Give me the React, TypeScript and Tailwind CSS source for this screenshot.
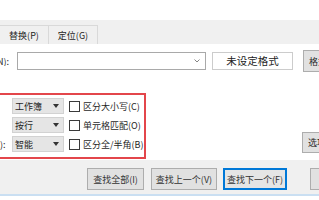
import React from "react";

function Tri() {
  return (
    <svg width="6" height="4" viewBox="0 0 6 4" className="shrink-0">
      <polygon points="0,0 6,0 3,4" fill="#333" />
    </svg>
  );
}

function Row({ label, sel, check }: { label: string; sel: string; check: string }) {
  return (
    <div className="h-[16px] flex items-center">
      <div className="w-[12px] h-full shrink-0 flex items-center overflow-hidden">
        <span className="whitespace-nowrap -ml-[5px]">{label}</span>
      </div>
      <div className="w-[52px] h-[16px] shrink-0 bg-[#e5e5e5] border border-[#d2d2d2] flex items-center justify-between pl-[2px] pr-[4px]">
        <span>{sel}</span>
        <Tri />
      </div>
      <div className="ml-[5px] w-[11px] h-[11px] shrink-0 border border-[#3a3a3a] bg-white" />
      <span className="ml-[3px] whitespace-nowrap">{check}</span>
    </div>
  );
}

function Btn({ w, ml, children, focus }: { w: string; ml: string; children?: React.ReactNode; focus?: boolean }) {
  return (
    <div
      className={`${w} ${ml} h-[22px] shrink-0 flex items-center justify-center whitespace-nowrap ${
        focus
          ? "bg-[#e5e5e5] border border-[#0078d7] shadow-[inset_0_0_0_1px_#0078d7]"
          : "bg-[#e1e1e1] border border-[#adadad]"
      }`}
    >
      {children}
    </div>
  );
}

export default function App() {
  return (
    <div className="w-[319px] h-[200px] overflow-hidden bg-white text-[#1f1f1f] text-[9px] leading-none flex flex-col font-['Noto_Sans_CJK_SC','Liberation_Sans',sans-serif]">
      <div className="h-[20px] shrink-0" />
      <div className="h-[24px] shrink-0 bg-[#f0f0f0] flex items-end">
        <div className="w-[49px] h-[19px] shrink-0 border-t border-r border-[#d9d9d9] bg-[#f0f0f0] flex items-center justify-center">
          替换(P)
        </div>
        <div className="w-[49px] h-[19px] shrink-0 border-t border-r border-[#d9d9d9] bg-[#f0f0f0] flex items-center justify-center">
          定位(G)
        </div>
      </div>
      <div className="h-[116px] shrink-0 flex flex-col">
        <div className="mt-[6px] h-[22px] flex items-center">
          <div className="w-[17px] shrink-0 overflow-hidden">
            <span className="whitespace-nowrap -ml-[3px] block">N):</span>
          </div>
          <div className="w-[189px] h-[18px] shrink-0 border border-[#a9a9a9] bg-white flex items-center justify-end pr-[5px]">
            <svg width="6" height="4" viewBox="0 0 6 4">
              <polyline points="0.5,0.5 3,3 5.5,0.5" fill="none" stroke="#777" strokeWidth="0.9" />
            </svg>
          </div>
          <div className="ml-[6px] w-[81px] h-[18px] shrink-0 border border-[#cccccc] bg-white flex items-center justify-center text-[10.5px] text-[#222]">
            未设定格式
          </div>
          <div className="ml-[10px] w-[30px] h-[22px] shrink-0 bg-[#e1e1e1] border border-[#adadad] flex items-center pl-[5px] whitespace-nowrap">
            格式
          </div>
        </div>
        <div className="mt-[21px] flex">
          <div className="-ml-[2px] w-[148px] h-[66px] shrink-0 border-2 border-[#e3464b] pt-[3px] flex flex-col gap-[3px]">
            <Row label="" sel="工作簿" check="区分大小写(C)" />
            <Row label="" sel="按行" check="单元格匹配(O)" />
            <Row label="L):" sel="智能" check="区分全/半角(B)" />
          </div>
          <div className="self-end mb-[6px] ml-[156px] w-[30px] h-[21px] shrink-0 bg-[#e1e1e1] border border-[#adadad] flex items-center pl-[5px] whitespace-nowrap">
            选项
          </div>
        </div>
      </div>
      <div className="h-[34px] shrink-0 bg-[#f0f0f0] flex items-start pt-[8px] text-[#333]">
        <Btn w="w-[57px]" ml="ml-[87px]">查找全部(I)</Btn>
        <Btn w="w-[66px]" ml="ml-[7px]">查找上一个(V)</Btn>
        <Btn w="w-[64px]" ml="ml-[6px]" focus>查找下一个(F)</Btn>
        <Btn w="w-[30px]" ml="ml-[23px]" />
      </div>
      <div className="h-[2px] shrink-0 bg-[#cadff2]" />
      <div className="flex-1" />
    </div>
  );
}
